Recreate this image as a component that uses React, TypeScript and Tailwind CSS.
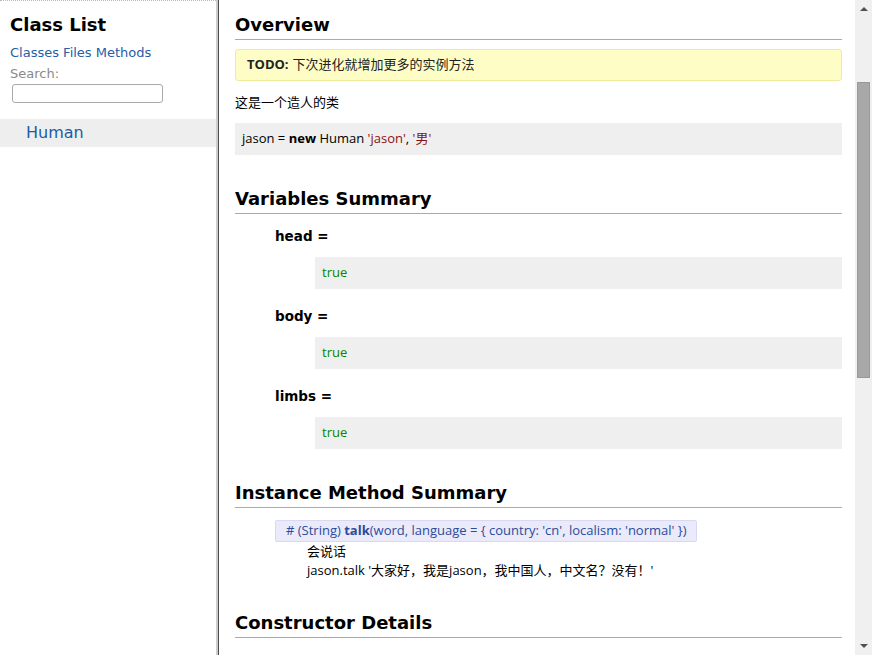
const sans = "font-['DejaVu_Sans','Noto_Sans_CJK_SC',sans-serif]";
const body = "font-['Open_Sans','Noto_Sans_CJK_SC',sans-serif]";

function Heading({ children, className = '' }: { children: React.ReactNode; className?: string }) {
  return (
    <h2
      className={`${sans} text-[18px] leading-[24px] font-bold text-black pb-[2px] border-b border-[#aaaaaa] ${className}`}
    >
      {children}
    </h2>
  );
}

function Variable({ name, first }: { name: string; first?: boolean }) {
  return (
    <div className={first ? 'mt-[12px]' : 'mt-[17px]'}>
      <div className={`${sans} pl-[40px] text-[13.5px] leading-[20px] font-bold text-black`}>{name} =</div>
      <div className={`${body} ml-[80px] mt-[11px] h-[32px] flex items-center pl-[7px] bg-[#efefef] text-[13px] text-[#008800]`}>
        true
      </div>
    </div>
  );
}

export default function App() {
  return (
    <div className="h-[655px] w-[872px] flex overflow-hidden bg-white">
      {/* Sidebar */}
      <aside className="w-[216px] shrink-0 border-t border-dotted border-[#b8b8b8]">
        <h1 className={`${sans} mt-[12px] pl-[10px] text-[18px] leading-[24px] font-bold text-black`}>Class List</h1>
        <nav className={`${sans} mt-[7px] pl-[10px] text-[13px] leading-[18px] text-[#2460a7]`}>
          Classes Files Methods
        </nav>
        <div className={`${sans} mt-[3px] pl-[10px] text-[13px] leading-[18px] text-[#8a8a8a]`}>Search:</div>
        <input className="ml-[12px] mt-[1px] block h-[19px] w-[151px] rounded-[3px] border border-[#a9a9a9] bg-white" />
        <div className={`${sans} mt-[16px] h-[28px] flex items-center pl-[26px] bg-[#eeeeee] text-[16px] text-[#1b5ca5]`}>
          Human
        </div>
      </aside>

      {/* Frame divider */}
      <div className="w-[3px] shrink-0 bg-[#cdcdcd] border-r border-[#4a4a4a]" />

      {/* Content */}
      <main className="flex-1 flex min-w-0">
        <div className="flex-1 pl-[16px] pr-[13px] min-w-0">
          <Heading className="mt-[13px]">Overview</Heading>
          <div className={`${body} mt-[9px] h-[32px] flex items-center pl-[11px] rounded-[3px] border border-[#eeeb9e] bg-[#fffdc6] text-[13px] text-[#222]`}>
            <span className="font-bold">TODO:</span>
            <span className="ml-[4px]">下次进化就增加更多的实例方法</span>
          </div>
          <p className={`${body} mt-[11px] text-[13px] leading-[20px] text-black`}>这是一个造人的类</p>
          <div className={`${body} mt-[11px] h-[32px] flex items-center pl-[7px] bg-[#efefef] text-[13px] text-black whitespace-pre`}>
            jason = <span className="font-bold">new</span> Human <span className="text-[#8b1111]">'jason'</span>, <span className="text-[#8b1111]">'男'</span>
          </div>

          <Heading className="mt-[32px]">Variables Summary</Heading>
          <Variable name="head" first />
          <Variable name="body" />
          <Variable name="limbs" />

          <Heading className="mt-[32px]">Instance Method Summary</Heading>
          <div className="mt-[12px] ml-[40px] flex">
            <div className={`${body} flex items-center h-[22px] px-[10px] rounded-[2px] border border-[#d8d8f2] bg-[#eaeafb] text-[13px] text-[#2a4c9a] whitespace-pre`}>
              # (String) <span className="font-bold">talk</span>(word, language = {'{'} country: 'cn', localism: 'normal' {'}'})
            </div>
          </div>
          <div className={`${body} ml-[72px] text-[13px] leading-[19px] text-black`}>
            <div>会说话</div>
            <div>jason.talk '大家好，我是jason，我中国人，中文名？没有！'</div>
          </div>

          <Heading className="mt-[31px]">Constructor Details</Heading>
        </div>

        {/* Scrollbar */}
        <div className="w-[17px] shrink-0 bg-[#f0f0f0] flex flex-col items-center">
          <div className="mt-[7px] h-0 w-0 border-x-[4px] border-x-transparent border-b-[4px] border-b-[#505050]" />
          <div className="mt-[71px] h-[296px] w-[13px] bg-[#a8a8a8] border border-[#999999]" />
          <div className="mt-auto mb-[7px] h-0 w-0 border-x-[4px] border-x-transparent border-t-[4px] border-t-[#505050]" />
        </div>
      </main>
    </div>
  );
}
